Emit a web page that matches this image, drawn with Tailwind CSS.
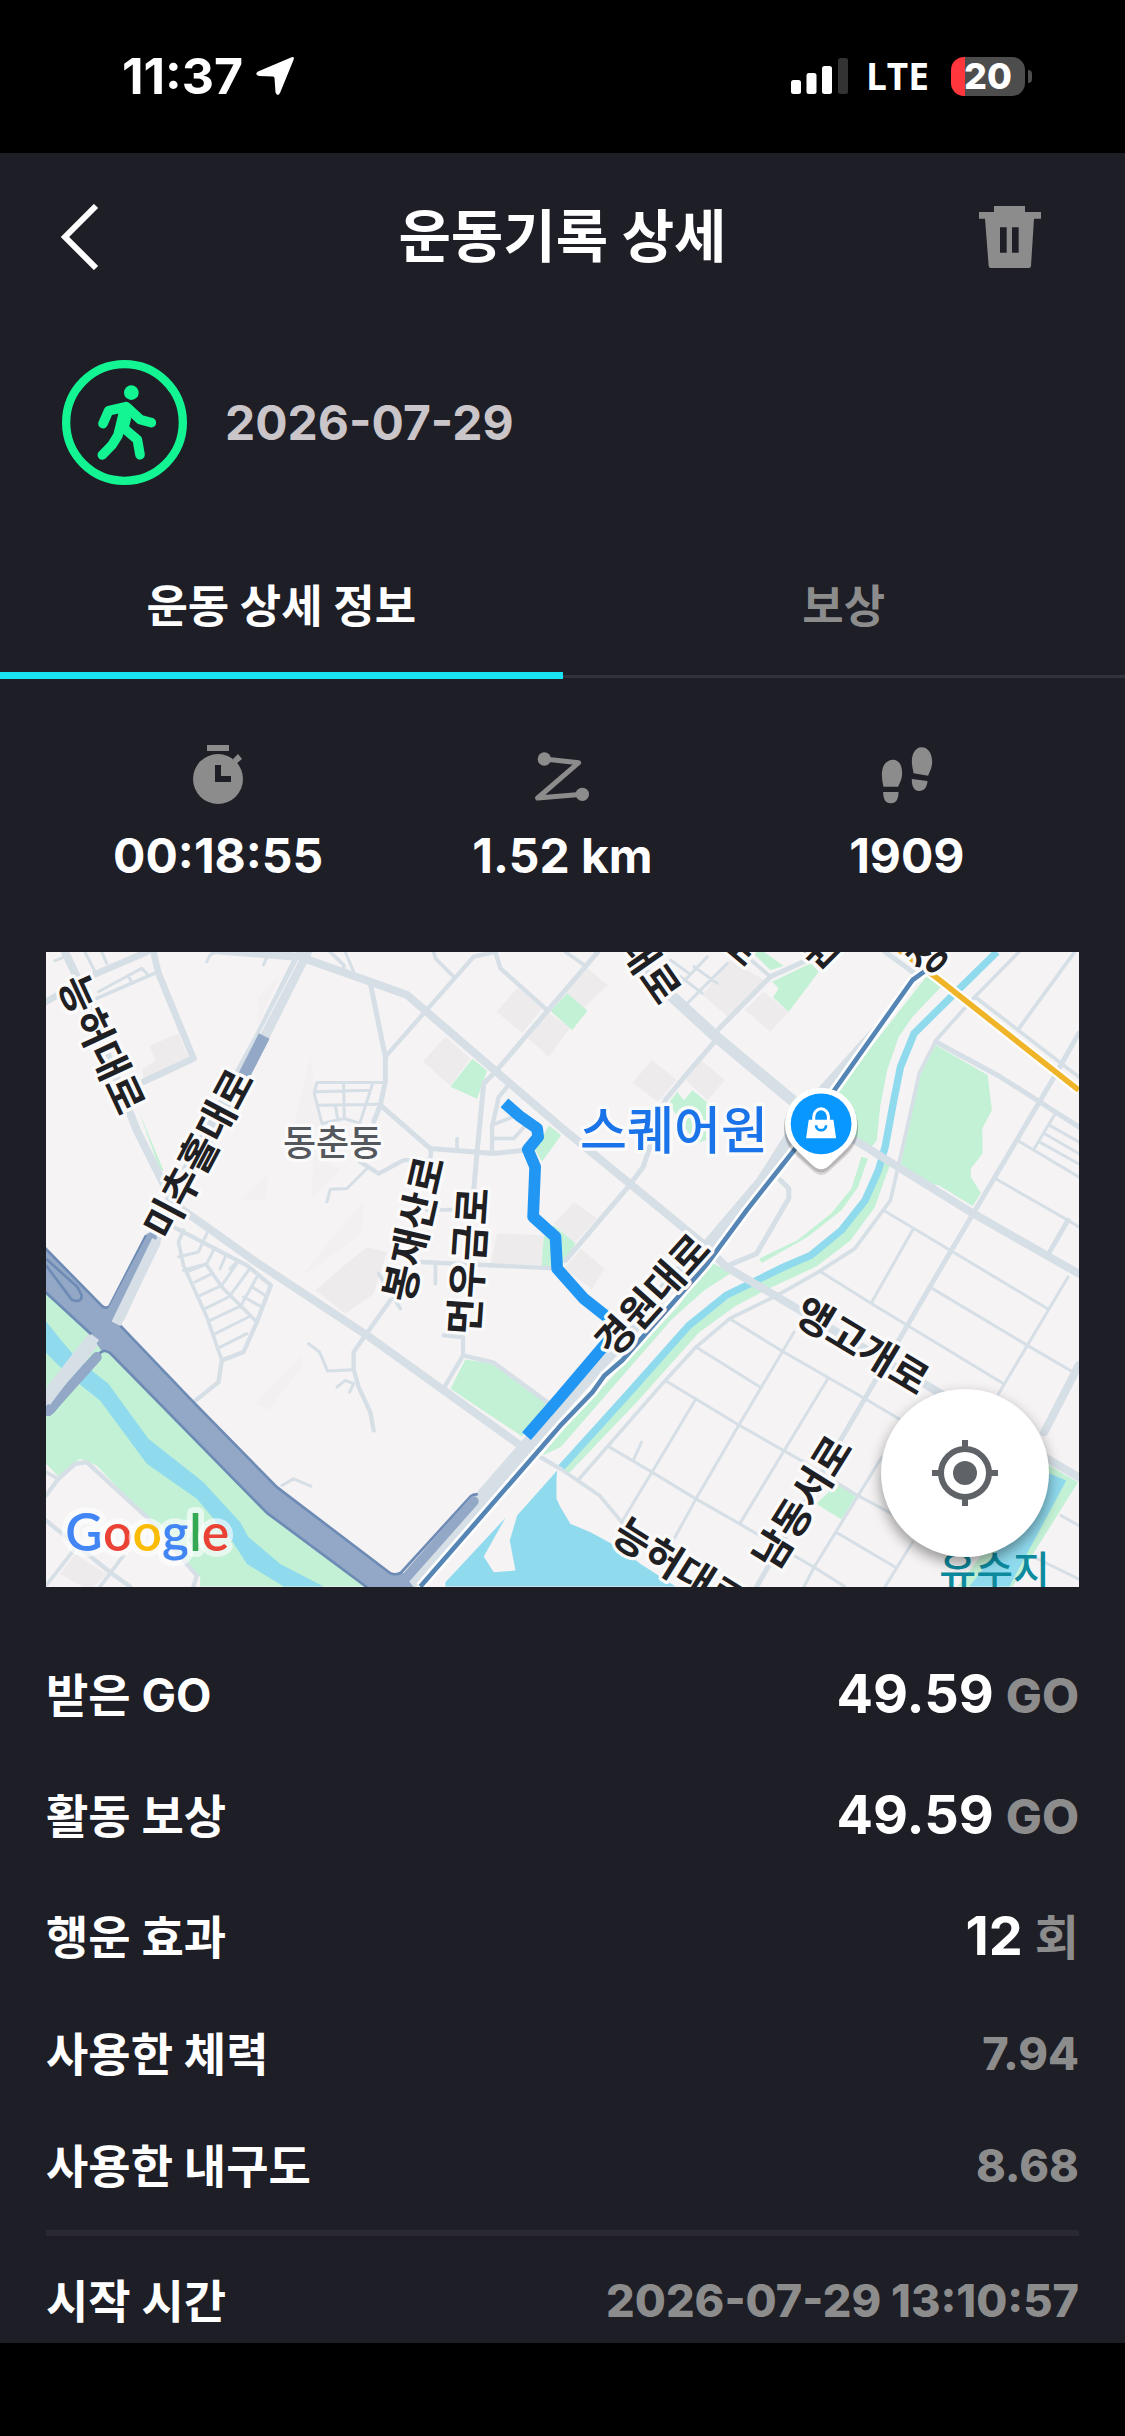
<!DOCTYPE html>
<html lang="ko">
<head>
<meta charset="utf-8">
<meta name="viewport" content="width=device-width, initial-scale=1">
<title>운동기록 상세</title>
<script src="https://cdn.jsdelivr.net/npm/@tailwindcss/browser@4"></script>
</head>
<body class="flex min-h-screen flex-col bg-black font-['Inter','Noto_Sans_CJK_KR',sans-serif] text-white">

<!-- Status bar -->
<div class="flex h-[153px] items-start justify-between pt-[48px] pr-[93px] pl-[122px]">
  <div class="flex h-[56px] items-center gap-3">
    <span class="text-[50px] leading-[56px] font-bold">11:37</span>
    <svg class="h-[40px] w-[40px]" viewBox="0 0 40 40" fill="#fff" aria-hidden="true"><path d="M36 1.500Q40 0 38.500 4L25 37Q22.500 41 20.500 36.500L19.500 22Q19.300 20.500 18 20.500L4 20Q-1 18.500 3 15.500Z"/></svg>
  </div>
  <div class="flex h-[56px] items-center">
    <svg class="h-[36px] w-[57px]" viewBox="0 0 57 36" fill="#fff" aria-hidden="true"><rect x="0" y="22" width="10" height="14" rx="2.500"/><rect x="15.500" y="15" width="10" height="21" rx="2.500"/><rect x="31" y="8" width="10" height="28" rx="2.500"/><rect x="47" y="0" width="10" height="36" rx="2.500" fill="#333"/></svg>
    <span class="ml-[18px] font-['Open_Sans'] text-[37px] leading-[56px] font-bold">LTE</span>
    <div class="ml-[22px] flex h-[39px] w-[74px] items-center justify-center rounded-[13px] bg-linear-to-r from-[#ff373c] from-19% to-[#4d4d4d] to-19% text-[36px] font-extrabold">20</div>
    <div class="ml-[3px] h-[13px] w-1 rounded-r-full bg-[#4d4d4d]"></div>
  </div>
</div>

<main class="bg-[#1e1e26] pb-[9px]">
  <!-- Title bar -->
  <header class="flex h-[168px] items-center justify-between px-[60px]">
    <button type="button" aria-label="뒤로" class="w-[86px]"><svg class="h-[66px] w-[40px]" viewBox="0 0 40 66" fill="none" stroke="#fff" stroke-width="6"><path d="M36 2 5 33l31 31"/></svg></button>
    <h1 class="text-[57px] leading-[80px] font-bold">운동기록 상세</h1>
    <button type="button" aria-label="삭제" class="w-[86px]"><svg class="h-[62px] w-[62px]" viewBox="0 0 186 186" fill="#8c8c8c" fill-rule="evenodd"><path d="M45 0H138V18H186V38H165L156 180Q155 186 150 186H35Q30 186 29 180L18 38H0V18H45ZM63 64V140H83V64ZM99 64V140H119V64Z"/></svg></button>
  </header>

  <!-- Activity type and date -->
  <div class="flex items-center gap-[38px] px-[62px] pt-[39px]">
    <svg class="h-[125px] w-[125px]" viewBox="0 0 375 375" fill="none" stroke="#12f592" stroke-linecap="round" stroke-linejoin="round" role="img" aria-label="걷기"><circle cx="187.500" cy="187.500" r="175" stroke-width="25"/><circle cx="208" cy="98" r="22" fill="#12f592" stroke="none"/><path stroke-width="29" d="M192 140 140 152 123 191M195 142 235 179 268 188M186 205 226 239 234 284M187 148 168 226 150 255 121 285"/><path fill="#12f592" stroke="none" d="M172 140 205 138 207 178 200 206 168 232Z"/></svg>
    <time class="text-[48px] leading-[60px] font-bold text-[#cac5c8]" datetime="2026-07-29">2026-07-29</time>
  </div>

  <!-- Tabs -->
  <div class="mt-[49px] grid grid-cols-2" role="tablist">
    <button type="button" role="tab" aria-selected="true" class="h-[145px] border-b-[7px] border-[#18e4f4] pt-2 text-[45px] leading-[66px] font-bold">운동 상세 정보</button>
    <button type="button" role="tab" aria-selected="false" class="relative h-[145px] border-b-[7px] border-transparent pt-2 text-[45px] leading-[66px] font-bold text-[#8c8c8c] after:absolute after:inset-x-0 after:-bottom-[6px] after:h-[3px] after:bg-[#33323c]">보상</button>
  </div>

  <!-- Summary figures -->
  <div class="mx-[46px] grid grid-cols-3 pt-[66px] text-center text-[48px] leading-[60px] font-bold">
    <div class="flex flex-col items-center gap-[21px]">
      <svg class="h-[60px] w-[52px]" viewBox="0 0 52 60" fill="#8c8c8c" role="img" aria-label="시간"><path d="M15 0H37V6H15ZM41 14 46 9 50 14 44 19Z"/><circle cx="26" cy="34" r="25"/><path fill="#1e1e26" d="M23 20H29V31H39V37H23Z"/></svg>
      <span>00:18:55</span>
    </div>
    <div class="flex flex-col items-center gap-[21px]">
      <svg class="h-[60px] w-[54px]" viewBox="0 -22 162 180" fill="none" stroke="#8c8c8c" stroke-width="15" stroke-linecap="round" stroke-linejoin="round" role="img" aria-label="거리"><path d="M28 20 131 31 8 137 142 126"/><circle cx="28" cy="20" r="20" fill="#8c8c8c" stroke="none"/><circle cx="142" cy="126" r="20" fill="#8c8c8c" stroke="none"/></svg>
      <span>1.52 km</span>
    </div>
    <div class="flex flex-col items-center gap-[21px]">
      <svg class="h-[60px] w-[52px]" viewBox="0 -6 153 180" fill="#8c8c8c" role="img" aria-label="걸음 수"><path d="M35 38C15 38 2 55 1 80C1 98 4 108 6 119H50C54 108 62 98 62 78C62 55 52 38 35 38ZM5 135H51C51 155 45 169 28 169C11 169 5 155 5 135ZM120 1C103 1 91 20 91 42C91 58 95 68 96 79L140 86C145 73 152 62 152 44C152 20 140 1 120 1ZM91 96 138 102C137 120 128 132 113 132C97 132 90 115 91 96Z"/></svg>
      <span>1909</span>
    </div>
  </div>

  <!-- Route map -->
  <div class="relative mx-[46px] mt-[66px]">
    <svg class="block aspect-[516/317] w-full bg-[#f5f3f4]" viewBox="18 36 3096 1902" preserveAspectRatio="xMidYMid slice" role="img" aria-label="운동 경로 지도">
      <g fill="#edebec">
        <path d="M415 280 445 352 310 425 308 385 348 362 328 318ZM1432 143 1505 205 1445 278 1368 215ZM1215 290 1290 355 1230 437 1148 365ZM1520 215 1590 262 1525 350 1463 295ZM1641 85 1702 135 1623 210 1575 155ZM2067 60 2180 125 2067 235 1986 165ZM2168 155 2244 215 2189 275 2113 210ZM1834 360 1908 420 1852 485 1776 428ZM1981 360 2052 420 2001 480 1935 420ZM1601 785 1670 835 1600 910 1540 850ZM1370 880 1510 885 1505 975 1350 970ZM980 920 1040 935 1000 1060 915 1120 825 1050 900 985ZM105 1840 200 1900 150 1950 60 1900ZM1621 925 1692 985 1655 1045 1570 985Z"/>
        <path fill="#f2f0f1" d="M655 170 720 105 650 260ZM810 350 760 560 840 570ZM600 778 685 700 675 778ZM820 640 900 690 815 770ZM970 780 965 880 820 985 780 1010ZM780 1250 790 1270 685 1410 645 1390Z"/>
      </g>
      <g fill="#c3f1d5">
        <path d="M1296 356 1340 392 1310 476 1230 440ZM1530 213 1580 160 1641 212 1595 270ZM1525 556 1562 585 1505 664 1484 630ZM1540 855 1605 910 1560 980 1503 978 1510 890Z"/>
        <path d="M2133 36H2170L2229 78 2189 90ZM2194 125 2310 70 2334 95 2244 215 2197 172 2214 145ZM1910 455 1930 480 1955 450 1998 485 1996 600 1966 610 1884 490Z"/>
        <path d="M2660 105 2701 140 2615 230 2574 290 2539 390 2518 500 2508 600 2488 625 2442 598 2386 455Z"/>
        <path d="M2684 315 2840 405 2853 510 2824 565 2825 640 2790 685V710L2820 758 2795 797 2694 735 2675 732 2579 675 2635 400Z"/>
        <path d="M2462 650 2481 655 2452 740 2402 810 2300 890 2163 968 2156 955 2270 900 2371 820 2432 745Z"/>
        <path d="M2010 965 2072 997 1991 1050 1895 1135 1560 1520 1505 1545 1560 1475 1915 1095Z"/>
        <path d="M18 1055 150 1180 200 1230 680 1720 980 1938H480V1910L330 1745 170 1575 120 1555 55 1607 18 1570ZM295 510 370 690 360 690Z"/>
        <path d="M1275 1257 1360 1270 1520 1387 1445 1488 1230 1345ZM2391 1630 2447 1665 2402 1737 2326 1690ZM3020 1572 3111 1625 2915 1938H2750L2840 1820Z"/>
      </g>
      <path fill="none" stroke="#c3f1d5" stroke-width="30" d="M2533 670 2488 795 2418 890 2320 965 2180 1030 2080 1082 1965 1165 1780 1372 1572 1590"/>
      <path fill="none" stroke="#90daee" stroke-width="22" d="M2868 36 2736 165 2620 280 2579 380 2559 480 2533 620 2513 690 2473 780 2402 870 2310 945 2225 982 2138 1025 2057 1065 1945 1155 1763 1360 1560 1584"/>
      <g fill="#90daee">
        <path d="M18 1143 60 1195 110 1255 205 1330 325 1495 490 1625 600 1745 625 1790 720 1870 850 1938H730L620 1870 575 1800 470 1675 320 1570 180 1380 110 1325 45 1265 18 1237Z"/>
        <path d="M1550 1590 1430 1725 1408 1800 1425 1890 1360 1895 1330 1848 1395 1732 1215 1925V1938H1905L1800 1870 1742 1825 1650 1775 1590 1750 1560 1700 1548 1675V1615Z"/>
        <path d="M3020 1597 3076 1620 2905 1938H2785L2900 1790Z"/>
      </g>

      <!-- Streets, thinnest to widest -->
      <g fill="none" stroke="#d6dfe6" stroke-linecap="round" stroke-linejoin="round">
        <path stroke-width="9" d="M175 155 305 85 320 100M265 105 275 130M135 36 165 95M185 36 200 70M45 62 75 50M500 65 510 45 530 36M670 75 680 50M915 36 940 95M830 427H1035M830 427 822 460 845 550 912 535 960 550M825 455 990 450M835 495 1020 492M910 427 912 535M998 427 960 545M885 495 893 540M980 685 920 745 870 747 860 785M440 995 490 975M465 1025 515 1000M480 1065 545 1035M495 1105 565 1070M510 1140 595 1100M525 1180 625 1130M540 1220 620 1180M545 1035 590 970M570 1065 625 990M600 1100 650 1010M610 1070 665 1100M635 1040 675 1065M415 950 475 935 500 880M430 990 500 970 520 930M540 985 555 950M570 985 590 965M805 1210 838 1235 862 1292 940 1288M890 1340 915 1320 940 1330 928 1355M725 1635 760 1615 812 1637"/>
        <path stroke-width="9" d="M2863 715 3081 840 3113 860M2929 600 3113 710M3040 525 2980 625M3025 555 3113 605M3010 580 3113 640M2995 605 3111 670M2528 810 3020 1105M2615 870 2493 1085M2341 995 2493 1090 2888 1330M2675 1045 2959 1215 3096 1295M3081 1010 2873 1360M2067 1135 2229 1235 2473 1375 2574 1435M1966 1220 2158 1340M1874 1320 2097 1455 2290 1565 2442 1660 2554 1720M1707 1520 1834 1595 1966 1675 2097 1750 2320 1880 2412 1938M1743 1745 1834 1595 1966 1375M1895 1805 1966 1675 2097 1450 2260 1175M2361 1315 2097 1750M2523 1550 2320 1880 2290 1938M2386 1775 2564 1880M2615 1805 2533 1938M3060 1725 3113 1755M2980 1850 3113 1915M1803 1505 1778 1560M1940 190 2060 70M1905 150 2000 50M1960 80 2030 130M1920 110 1985 160M1890 60 1945 100"/>
        <path stroke-width="11" d="M2802 170 3061 370 3113 410M2934 36 2802 170 2686 300 2635 400 2604 540 2549 780 2442 925 2330 997 2209 1065 2067 1135 1966 1220 1874 1320 1616 1615M3101 36 2934 265M1560 1585 1677 1665 1748 1750M1180 36 1185 55 1240 110M1355 555 1430 525M1360 595 1420 595 1460 550M1250 595V630M1160 810 1240 808M1185 975V1030M170 175 355 95M870 36 910 75 912 100M430 870 415 905 430 975 500 1130 545 1260M500 975 545 1040 650 1145M1575 36 1631 75M2103 36 2189 110M1015 1000 1080 1105M18 1595 55 1615M100 1830 18 1935M250 1845 180 1938"/>
        <path stroke-width="13" d="M1035 350 1300 50 1365 36 1380 85 1520 210M1400 440 1375 470 1355 560V640M960 665 1015 700 1090 660H1170L1172 625M1140 965 1560 985M400 860 620 975 692 1035 650 1145 610 1235 545 1260 535 1325 460 1385M1050 1080 975 1185 940 1235V1285L955 1340 990 1415 1000 1470M1210 1185 1268 1190V1245L1360 1267 1520 1385M1268 1245 1215 1335M1500 1550 1560 1585M18 1665 55 1615 105 1570 140 1565 320 1730 470 1905 460 1938M18 1740 210 1895 270 1938"/>
        <path stroke-width="15" d="M990 130 1035 350V425L1020 495 1000 545M1020 495 1170 625 1360 640 1450 630M1672 36 1365 395 1330 430 1310 635 1300 750M2026 300 1940 400 1874 480 1808 680 1763 740 1575 960M2031 270 2189 110 2300 60M2219 720 2244 745V775L2148 940 2057 978M2533 36 2635 110M2684 305 2878 410 3113 560M3113 280 3040 410 2797 820 2696 990 2402 1495 2148 1938M3081 840 3020 945"/>
        <path stroke-width="20" d="M18 185 160 105 320 36M340 36 355 100 460 355 310 425"/>
        <path stroke-width="24" d="M75 36 110 110 290 570 360 710 400 790 500 860 640 960 980 1185 1440 1515M520 30 770 50 820 65 990 125 1100 165 1155 212 1560 560 1987 910 2057 980 2270 1105 2675 1345 3020 1555 3113 1610M2442 600 2797 820 3113 1000M3113 1275 3010 1475"/>
        <path stroke-width="34" d="M1790 80 1895 170 2026 290 2290 510"/>
        <path stroke-width="44" d="M795 30 665 290 370 830 235 1125M165 1190 10 1390M1100 1935 1330 1665 1560 1400 1981 930"/>
      </g>
      <path fill="#d6dfe6" d="M1965 930 2148 715 2240 570 2331 445 2604 140 2640 80 2650 100 2381 450 2260 630 2118 800 2000 950Z"/>
      <path fill="none" stroke="#f5f3f4" stroke-width="3" d="M775 60 655 290"/>

      <!-- Expressway -->
      <g stroke="#6d8bb4" stroke-width="8" stroke-linejoin="round" fill="#92a8c6">
        <path d="M320 880 205 1100Q195 1108 187 1098L5 915V1045L150 1180 185 1232Q200 1222 212 1238L680 1717 980 1940H1120L1085 1895Q1070 1907 1050 1899L710 1640 460 1385 235 1150 230 1100 345 885Z" stroke="none"/>
        <path fill="none" d="M318 885 208 1098Q198 1106 187 1098L5 913M240 1155 460 1385 710 1640 1050 1898Q1068 1905 1083 1895L1290 1668Q1300 1660 1312 1662M5 1045 155 1183M20 1420 40 1413 182 1236Q195 1226 210 1238L680 1717 980 1940"/>
        <path fill="none" d="M18 975 95 1078Q125 1090 125 1065L112 1040 18 955"/>
      </g>
      <g fill="none" stroke="#92a8c6" stroke-width="30" stroke-linecap="round">
        <path d="M335 890 215 1115M170 1250 25 1412M1085 1925 1300 1682"/>
        <path stroke-linecap="butt" stroke-width="36" d="M672 288 612 405"/>
      </g>
      <path fill="none" stroke="#d6dfe6" stroke-width="30" d="M350 900 228 1150M165 1190 18 1385"/>

      <!-- Railways -->
      <g fill="none" stroke-linejoin="round">
        <path stroke="#fff" stroke-width="30" d="M2584 36 2696 120 3113 450M1140 1938 1560 1455 1656 1355 1692 1305 1745 1260 1996 975 2118 810 2260 630 2381 450 2615 120 2650 95"/>
        <path stroke="#f0b429" stroke-width="17" d="M2570 26 2696 120 3113 450"/>
        <path stroke="#5585b5" stroke-width="14" d="M1140 1938 1560 1455 1656 1355 1692 1305 1745 1260 1996 975 2118 810 2260 630 2381 450 2615 120 2650 95"/>
      </g>

      <!-- Walked route -->
      <path fill="none" stroke="#2196f3" stroke-width="35" stroke-linejoin="round" d="M1392 488 1440 530 1490 565 1493 590 1462 628 1484 680 1478 830 1545 890 1550 985 1630 1075 1725 1150 1700 1205 1560 1370 1458 1487"/>

      <!-- Street and place names -->
      <g class="font-['Noto_Sans_CJK_KR',sans-serif]" font-size="120" font-weight="700" fill="#1f2023" stroke="#fafafa" stroke-width="20" stroke-linejoin="round" paint-order="stroke" text-anchor="middle">
        <text transform="translate(185 312) rotate(65)" y="44">능허대로</text>
        <text transform="translate(475 640) rotate(-62)" y="44">미추홀대로</text>
        <text transform="translate(1120 866) rotate(-77)" y="44">봉재산로</text>
        <text transform="translate(1284 963) rotate(-86)" y="44">먼우금로</text>
        <text transform="translate(1835 1065) rotate(-48)" y="44">경원대로</text>
        <text transform="translate(2464 1216) rotate(31)" y="44">앵고개로</text>
        <text transform="translate(2284 1686) rotate(-58)" y="44">남동서로</text>
        <text transform="translate(1917 1880) rotate(32)" y="44">능허대로</text>
        <text transform="translate(1828 85) rotate(55)" y="44">대로</text>
        <text transform="translate(2100 15) rotate(40)" y="44">로</text>
        <text transform="translate(2335 25) rotate(-45)" y="44">원</text>
        <text transform="translate(2660 45) rotate(-45)" y="44">정</text>
        <text x="877" y="646" font-size="108" font-weight="500" fill="#54575c">동춘동</text>
        <text x="1900" y="626" font-size="153" font-weight="500" fill="#1a73e8">스퀘어원</text>
        <text x="2861" y="1932" font-weight="500" fill="#0d8a9e" stroke="none">유수지</text>
      </g>

      <!-- Shopping pin -->
      <g fill="#000" opacity=".12"><path d="M2230 565a111 111 0 0 1 222 0c0 57-30 77-83 125q-28 28-56 0c-53-48-83-68-83-125Z"/></g>
      <g fill="#000" opacity=".15"><path d="M2230 558a111 111 0 0 1 222 0c0 57-30 77-83 125q-28 28-56 0c-53-48-83-68-83-125Z"/></g>
      <path fill="#fff" d="M2233 551a108 108 0 0 1 216 0c0 55-30 72-80 122q-28 28-56 0c-50-50-80-67-80-122Z"/>
      <circle cx="2341" cy="551" r="91" fill="#0896ff"/>
      <path fill="#fff" d="M2304 539H2378L2386 594H2296Z"/>
      <path fill="none" stroke="#fff" stroke-width="9" d="M2319 545V530a22 24 0 0 1 44 0V545"/>
      <path fill="none" stroke="#0896ff" stroke-width="8" d="M2326 555a15 15 0 0 0 30 0"/>

      <!-- Map provider -->
      <text x="76" y="1831" class="font-['Lato',sans-serif]" font-size="155" font-weight="600" stroke="#fff" stroke-opacity=".6" stroke-width="34" stroke-linejoin="round" paint-order="stroke" fill="#4285f4">G<tspan fill="#ea4335">o</tspan><tspan fill="#fbbc05">o</tspan><tspan>g</tspan><tspan fill="#34a853">l</tspan><tspan fill="#ea4335">e</tspan></text>
    </svg>
    <button type="button" aria-label="현재 위치" class="absolute right-[30px] bottom-[30px] flex size-[168px] items-center justify-center rounded-full bg-white shadow-[0_6px_14px_rgba(0,0,0,0.4)]">
      <svg class="size-[66px]" viewBox="0 0 66 66" fill="none" stroke="#5f6368" stroke-width="6"><circle cx="33" cy="33" r="24"/><circle cx="33" cy="33" r="12" fill="#5f6368" stroke="none"/><path d="M33 0V9M33 57V66M0 33H9M57 33H66"/></svg>
    </button>
  </div>

  <!-- Rewards and usage -->
  <dl class="mx-[46px] pt-[48px] text-[46px] leading-[66px] font-bold">
    <div class="flex h-[121px] items-center justify-between"><dt>받은 GO</dt><dd class="flex items-baseline gap-3"><span class="text-[54px]">49.59</span><span class="text-[48px] font-extrabold text-[#8c8c8c]">GO</span></dd></div>
    <div class="flex h-[121px] items-center justify-between"><dt>활동 보상</dt><dd class="flex items-baseline gap-3"><span class="text-[54px]">49.59</span><span class="text-[48px] font-extrabold text-[#8c8c8c]">GO</span></dd></div>
    <div class="flex h-[121px] items-center justify-between"><dt>행운 효과</dt><dd class="flex items-baseline gap-3"><span class="text-[54px]">12</span><span class="text-[48px] text-[#8c8c8c]">회</span></dd></div>
    <div class="flex h-[112px] items-center justify-between"><dt>사용한 체력</dt><dd class="text-[45px] font-extrabold text-[#8c8c8c]">7.94</dd></div>
    <div class="flex h-[113px] items-center justify-between"><dt>사용한 내구도</dt><dd class="text-[45px] font-extrabold text-[#8c8c8c]">8.68</dd></div>
    <div class="mt-[7px] flex h-[104px] items-end justify-between border-t-[6px] border-[#2a2932]"><dt>시작 시간</dt><dd class="text-[45px] font-extrabold text-[#8c8c8c]">2026-07-29 13:10:57</dd></div>
  </dl>
</main>
</body>
</html>
